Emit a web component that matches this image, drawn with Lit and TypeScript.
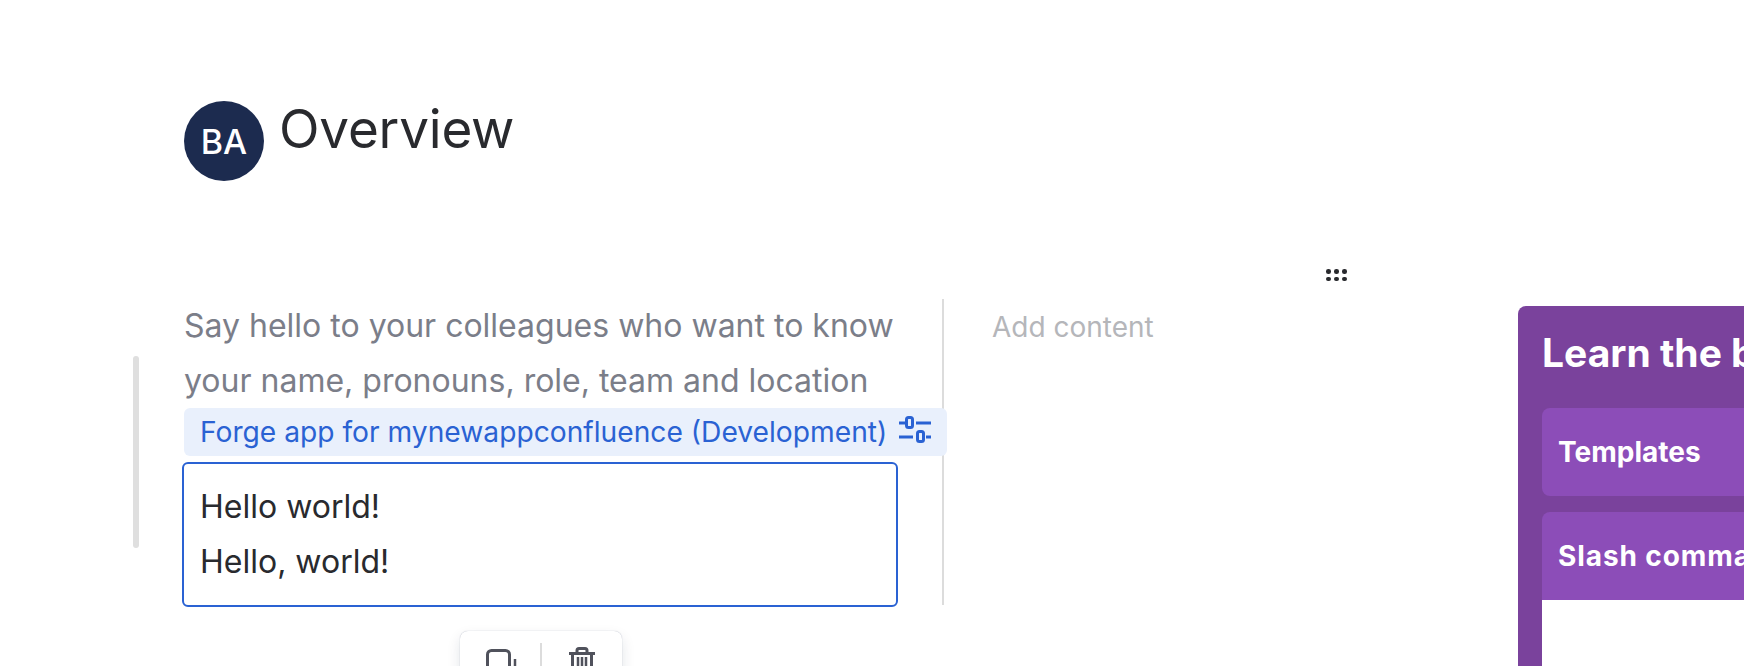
import { LitElement, html, css } from "lit";
import { customElement } from "lit/decorators.js";

@customElement("app-root")
export class AppRoot extends LitElement {
  static styles = css`
    :host { display: block; width: 1744px; height: 666px; overflow: hidden; background: #fff; font-family: Inter, "Liberation Sans", sans-serif; position: relative; }
    .header { display: flex; gap: 15px; padding: 101px 0 0 184px; height: 80px; }
    .avatar { width: 80px; height: 80px; border-radius: 50%; background: #1c2b4f; color: #fff; display: flex; align-items: center; justify-content: center; font-size: 34px; font-weight: 500; }
    .title { font-size: 53px; line-height: 56px; font-weight: 400; color: #292a2e; letter-spacing: -0.2px; }
    .handle { display: grid; grid-template-columns: repeat(3, 4px); gap: 3px 4px; margin: 88px 0 0 1326px; height: 11px; }
    .handle i { width: 4.5px; height: 4.5px; border-radius: 50%; background: #292a2e; }
    .body { display: flex; margin-top: 19px; height: 400px; }
    .rail-wrap { padding-left: 133px; flex: none; width: 6px; margin-right: 45px; }
    .rail { width: 6px; height: 192px; margin-top: 57px; background: #dfdfdf; border-radius: 3px; }
    .col { width: 758px; flex: none; height: 306px; }
    .hint { font-size: 32px; line-height: 55px; color: #7b7e89; margin: -1px 0 0; height: 110px; white-space: nowrap; }
    .label { display: flex; align-items: center; justify-content: space-between; width: 763px; height: 48px; box-sizing: border-box; padding: 0 16px; background: #e9f0fc; border-radius: 6px; color: #2a62d3; font-size: 28.2px; white-space: nowrap; position: relative; z-index: 1; }
    .label svg { margin-bottom: 4px; flex: none; }
    .box { margin: 6px 0 0 -2px; width: 716px; height: 145px; box-sizing: border-box; border: 2px solid #2a62d3; border-radius: 6px; padding: 15px 0 0 16px; font-size: 32px; line-height: 55px; color: #292a2e; }
    .divider { width: 2px; height: 306px; background: #dcdcdc; flex: none; }
    .add { margin-left: 48px; padding-top: 1px; width: 526px; flex: none; font-size: 28px; line-height: 55px; color: #b5b6ba; }
    .panel { width: 300px; flex: none; height: 400px; margin-top: 7px; background: #7a429c; border-radius: 8px 0 0 0; padding-left: 24px; box-sizing: border-box; }
    .panel h2 { margin: 0; padding-top: 23px; color: #fff; font-size: 39px; line-height: 48px; font-weight: 700; white-space: nowrap; }
    .cards { margin-top: 31px; display: flex; flex-direction: column; gap: 16px; }
    .card { height: 88px; background: #8c4db8; color: #fff; font-size: 28px; font-weight: 700; display: flex; align-items: center; padding-left: 16px; border-radius: 8px 0 0 8px; white-space: pre; }
    .card.open { border-radius: 8px 0 0 0; letter-spacing: 0.9px; }
    .rest { background: #fff; height: 200px; }
    .toolbar { position: absolute; left: 460px; top: 631px; width: 162px; height: 60px; box-sizing: border-box; background: #fff; border-radius: 8px; box-shadow: 0 0 1px rgba(9,30,66,.35), 0 6px 14px rgba(9,30,66,.12); display: flex; align-items: flex-start; }
    .copy { display: block; margin: 18px 0 0 26px; }
    .sep { width: 2px; height: 36px; background: #dcdcdc; margin: 12px 0 0 22px; flex: none; }
    .trash { display: block; margin: 16px 0 0 27px; }
  `;
  render() {
    return html`
      <div class="header">
        <div class="avatar">BA</div>
        <div class="title">Overview</div>
      </div>
      <div class="handle">${[0, 1, 2, 3, 4, 5].map(() => html`<i></i>`)}</div>
      <div class="body">
        <div class="rail-wrap"><div class="rail"></div></div>
        <div class="col">
          <p class="hint">Say hello to your colleagues who want to know<br />your name, pronouns, role, team and location</p>
          <div class="label">
            <span>Forge app for mynewappconfluence (Development)</span>
            <svg width="32" height="28" viewBox="0 0 32 28" fill="none" stroke="#2a62d3" stroke-width="3">
              <path d="M0 7h6M17 7h15M0 21h14M27 21h5" />
              <rect x="7.5" y="1.5" width="6" height="10" rx="2" />
              <rect x="18.5" y="15.5" width="6" height="10" rx="2" />
            </svg>
          </div>
          <div class="box">Hello world!<br />Hello, world!</div>
        </div>
        <div class="divider"></div>
        <div class="add">Add content</div>
        <div class="panel">
          <h2>Learn the basics</h2>
          <div class="cards">
            <div class="card">Templates</div>
            <div class="card open">Slash commands</div>
          </div>
          <div class="rest"></div>
        </div>
      </div>
      <div class="toolbar">
        <svg class="copy" width="32" height="36" viewBox="0 0 32 36" fill="none" stroke="#50525c" stroke-width="3"><rect x="1.5" y="1.5" width="22" height="32" rx="4"/><path d="M29 10v24" stroke-width="2.5"/></svg>
        <span class="sep"></span>
        <svg class="trash" width="26" height="36" viewBox="0 0 26 36" fill="none" stroke="#50525c" stroke-width="3"><path d="M0 6.5h26M8 6V3.5a2 2 0 0 1 2-2h6a2 2 0 0 1 2 2V6M3.5 8v28M22.5 8v28"/><path d="M9 10v26M13 10v26M17 10v26" stroke-width="2.5"/></svg>
      </div>
    `;
  }
}
